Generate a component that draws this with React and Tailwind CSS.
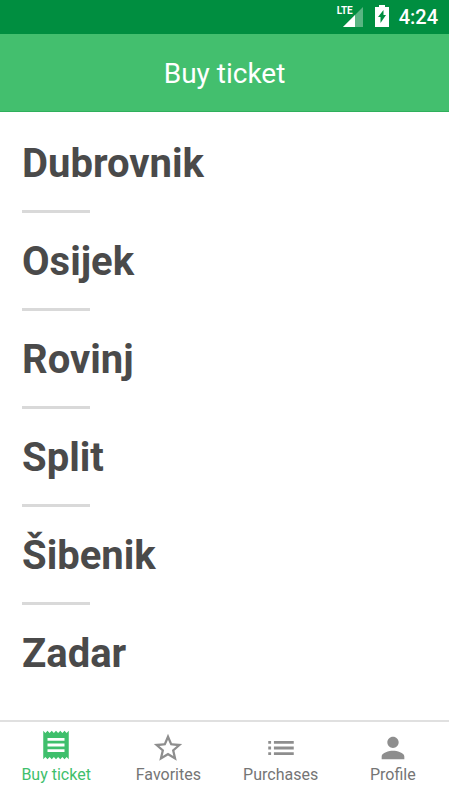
import { useState } from 'react'
import clsx from 'clsx'

const CITIES = ['Dubrovnik', 'Osijek', 'Rovinj', 'Split', 'Šibenik', 'Zadar']

const TABS = [
  {
    id: 'buy',
    label: 'Buy ticket',
    icon: 'M18 17H6v-2h12v2zm0-4H6v-2h12v2zm0-4H6V7h12v2zM3 22l1.5-1.5L6 22l1.5-1.5L9 22l1.5-1.5L12 22l1.5-1.5L15 22l1.5-1.5L18 22l1.5-1.5L21 22V2l-1.5 1.5L18 2l-1.5 1.5L15 2l-1.5 1.5L12 2l-1.5 1.5L9 2 7.500 3.500 6 2 4.500 3.500 3 2v20z',
  },
  {
    id: 'favorites',
    label: 'Favorites',
    icon: 'M22 9.240l-7.190-.62L12 2 9.190 8.630 2 9.240l5.460 4.730L5.820 21 12 17.270 18.180 21l-1.630-7.030L22 9.240zM12 15.400l-3.760 2.270 1-4.280-3.320-2.880 4.380-.38L12 6.100l1.710 4.040 4.380.38-3.320 2.880 1 4.280L12 15.400z',
  },
  {
    id: 'purchases',
    label: 'Purchases',
    icon: 'M3 13h2v-2H3v2zm0 4h2v-2H3v2zm0-8h2V7H3v2zm4 4h14v-2H7v2zm0 4h14v-2H7v2zM7 7v2h14V7H7z',
  },
  {
    id: 'profile',
    label: 'Profile',
    icon: 'M12 12c2.210 0 4-1.790 4-4s-1.790-4-4-4-4 1.790-4 4 1.790 4 4 4zm0 2c-2.670 0-8 1.340-8 4v2h16v-2c0-2.660-5.330-4-8-4z',
  },
]

function StatusBar() {
  return (
    <div className="flex h-[34px] items-center justify-end bg-[#008e40] pr-[11px] text-white">
      <div className="flex items-center gap-2">
        <div className="relative">
          <svg viewBox="0 0 20 20" className="ml-1 size-5" aria-hidden="true">
            <path d="M20 0v20H0z" fill="#fff" opacity=".35" />
            <path d="M12 8v12H0z" fill="#fff" />
            <path d="M0 0h11v9H0z" fill="#008e40" />
          </svg>
          <span className="absolute -top-0.5 -left-0.5 font-['Roboto'] text-[10px] leading-[12px] font-bold">LTE</span>
        </div>
        <svg viewBox="0 0 14 22" className="mr-0.5 mb-0.5 ml-1 h-[22px] w-[14px]" aria-hidden="true">
          <path d="M4 0h6v2h4v20H0V2h4z" fill="#fff" />
          <path d="M8.500 5v5H11l-5.500 8v-6H3z" fill="#008e40" />
        </svg>
        <time className="text-[20px] leading-6 font-medium">4:24</time>
      </div>
    </div>
  )
}

function CityList() {
  return (
    <ul className="flex-1 px-[22px] pt-7">
      {CITIES.map((city, i) => (
        <li key={city}>
          <a href={`#${city.toLowerCase()}`} className="block text-[40px] leading-[48px] font-bold text-[#4a4a4a]">
            {city}
          </a>
          {i < CITIES.length - 1 && <hr className="mt-[22px] mb-[25px] h-[3px] w-[68px] border-0 bg-[#d9d9d9]" />}
        </li>
      ))}
    </ul>
  )
}

function TabBar({ active, onChange }) {
  return (
    <nav className="grid grid-cols-4 border-t-2 border-[#e0e0e0] bg-white">
      {TABS.map((tab) => (
        <button
          key={tab.id}
          type="button"
          onClick={() => onChange(tab.id)}
          aria-current={tab.id === active ? 'page' : undefined}
          className={clsx(
            'flex flex-col items-center pb-[13px]',
            tab.id === active ? 'gap-[3px] pt-1.5 text-[#3fbf6c]' : 'pt-[9px] text-[#757575]'
          )}
        >
          <svg
            viewBox="0 0 24 24"
            fill="currentColor"
            className={clsx('size-[34px]', tab.id !== active && 'text-[#8e8e8e]')}
            aria-hidden="true"
          >
            <path d={tab.icon} />
          </svg>
          <span className="text-base leading-5">{tab.label}</span>
        </button>
      ))}
    </nav>
  )
}

export default function App() {
  const [tab, setTab] = useState('buy')

  return (
    <div className="flex min-h-screen flex-col bg-white font-['Roboto',sans-serif]">
      <StatusBar />
      <header className="border-b border-[#2fb05c] bg-[#43bf6e] pt-[22px] pb-[19px] text-center text-white">
        <h1 className="text-[28px] leading-9">Buy ticket</h1>
      </header>
      <CityList />
      <TabBar active={tab} onChange={setTab} />
    </div>
  )
}
